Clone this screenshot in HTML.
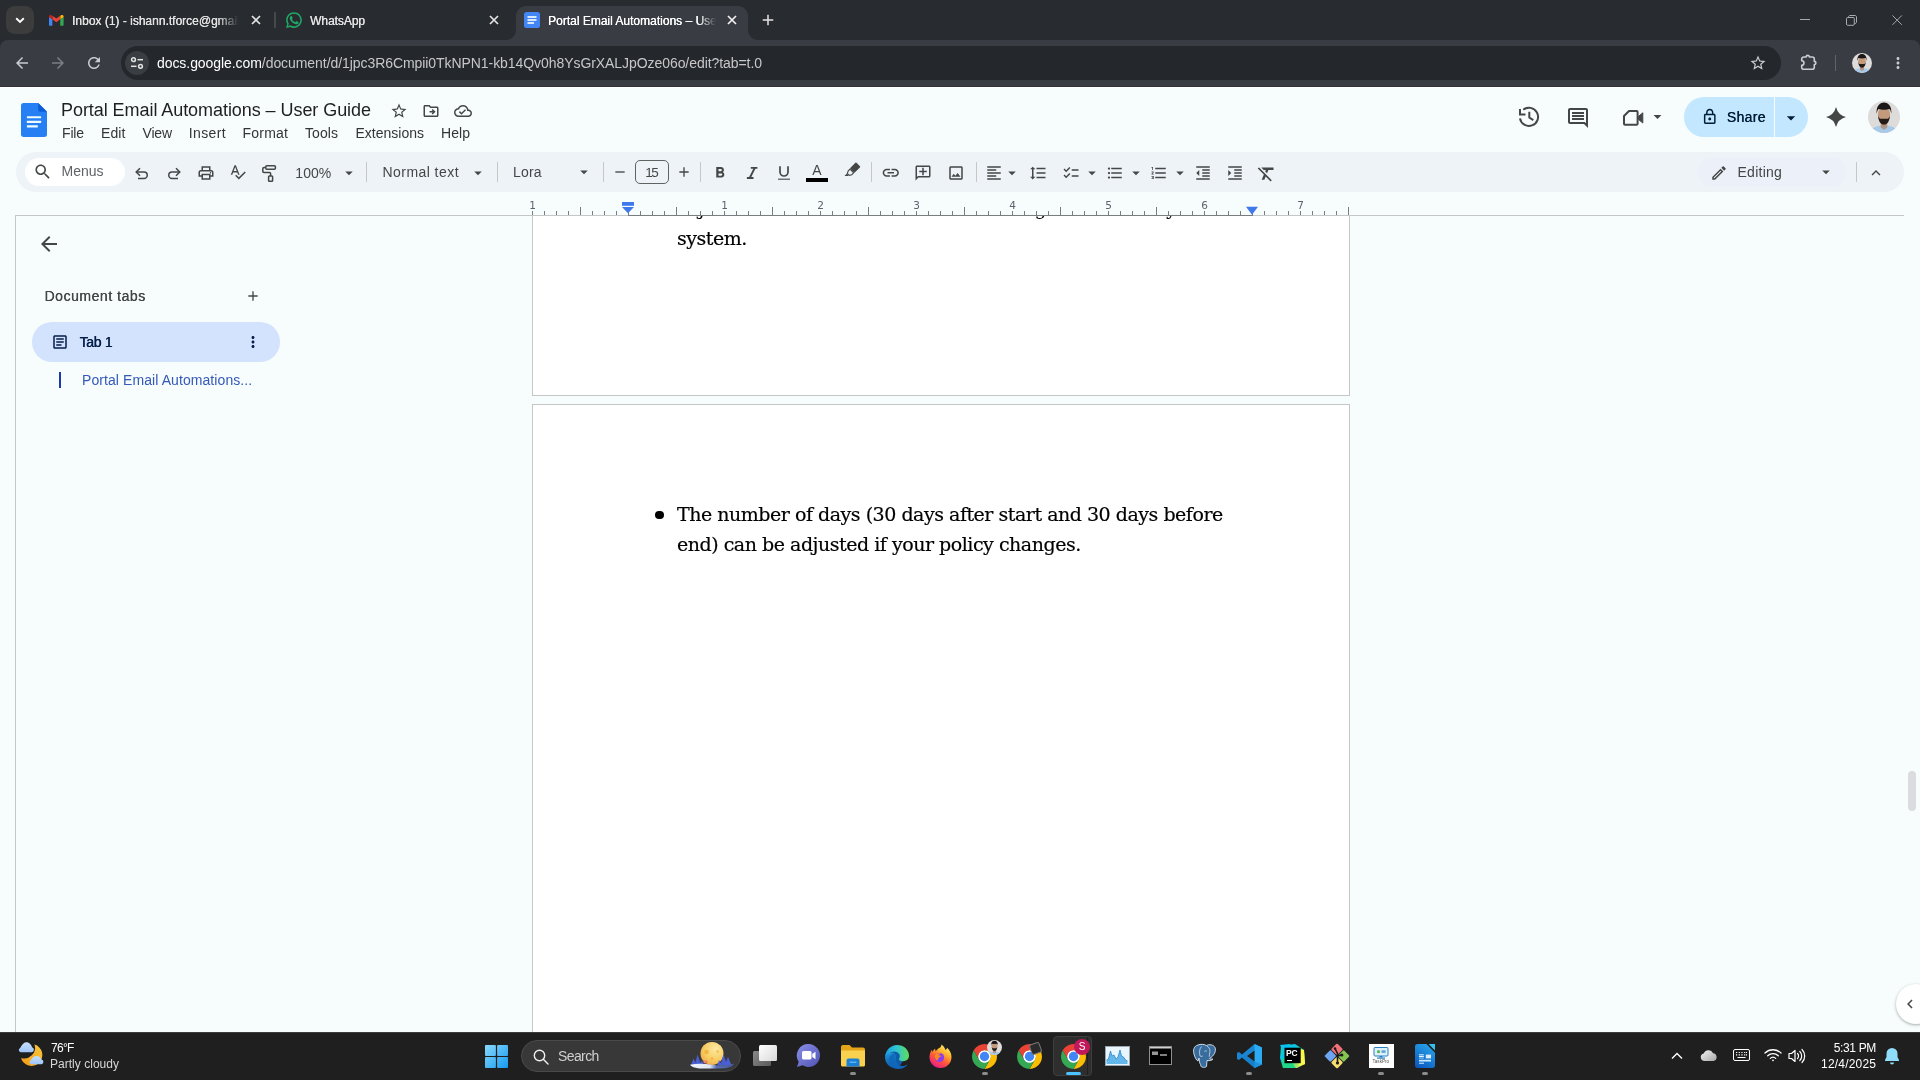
<!DOCTYPE html>
<html lang="en"><head><meta charset="utf-8"><title>Portal Email Automations – User Guide - Google Docs</title>
<style>html,body{margin:0;padding:0;}body{width:1920px;height:1080px;position:relative;overflow:hidden;background:#f7fcfc;font-family:"Liberation Sans",sans-serif;}svg{display:block;overflow:visible}</style>
</head><body><div id="root" style="position:absolute;left:0;top:0;width:1920px;height:1080px;will-change:transform;">
<div style="position:absolute;left:0px;top:0px;width:1920px;height:87px;background:#282b2f;"></div>
<div style="position:absolute;left:0px;top:40px;width:1920px;height:47px;background:#393c42;border-radius:8px 8px 0 0;"></div>
<div style="position:absolute;left:6.25px;top:6.25px;width:27.5px;height:27.5px;background:#3c3c3c;border-radius:8.500px;"></div>
<svg style="position:absolute;left:12px;top:12px" width="16" height="16" viewBox="0 0 16 16" fill="none" stroke="#ffffff" stroke-width="1.900"><path d="M4.200 6.200L8 9.900l3.800-3.700"/></svg>
<svg style="position:absolute;left:48.700px;top:14.500px" width="14.600" height="10.800" viewBox="0 0 17 13" preserveAspectRatio="none"><path d="M0 1.6V11.8c0 .66.54 1.2 1.2 1.2H3.9V5.2L0 2.3z" fill="#4285f4"/><path d="M13.1 13h2.7c.66 0 1.2-.54 1.2-1.200V2.300l-3.900 2.900z" fill="#34a853"/><path d="M13.1 .9v4.300L17 2.300V1.700c0-1.450-1.650-2.270-2.800-1.400z" fill="#fbbc04"/><path d="M3.900 5.200V.9l4.600 3.450L13.100.9v4.300L8.500 8.650z" fill="#ea4335"/><path d="M0 1.700v.6l3.900 2.900V.9L2.800.3C1.650-.57 0 .25 0 1.700z" fill="#c5221f"/></svg>
<span style="position:absolute;top:14.84px;font-family:'Liberation Sans', sans-serif;font-size:12px;line-height:1;color:#e3e3e3;white-space:pre;text-shadow:0.25px 0 0 #e3e3e3;left:72.00px;width:168px;padding-bottom:4px;overflow:hidden;-webkit-mask-image:linear-gradient(90deg,#000 145px,transparent 167px);mask-image:linear-gradient(90deg,#000 145px,transparent 167px);">Inbox (1) - ishann.tforce@gmail.com - Gmail</span>
<svg style="position:absolute;left:249.9px;top:14.2px" width="12" height="12" viewBox="0 0 12 12" fill="none" stroke="#e3e3e3" stroke-width="1.700"><path d="M2 2l8 8M10 2l-8 8"/></svg>
<div style="position:absolute;left:274.3px;top:12px;width:1.8px;height:16px;background:#45484d;"></div>
<svg style="position:absolute;left:285px;top:11px" width="18" height="18" viewBox="0 0 24 24"><path d="M12 1.500C6.200 1.500 1.500 6.200 1.500 12c0 1.900.5 3.700 1.400 5.300L1.400 22.600l5.500-1.400c1.500.8 3.300 1.300 5.100 1.300 5.800 0 10.500-4.700 10.500-10.500S17.800 1.500 12 1.500z" fill="#20a866"/><path d="M12 3.600c-4.600 0-8.400 3.800-8.400 8.400 0 1.700.5 3.300 1.400 4.700l-.9 3.200 3.300-.9c1.300.8 2.900 1.300 4.600 1.300 4.600 0 8.400-3.800 8.400-8.400S16.600 3.600 12 3.600z" fill="#282b2f"/><path d="M9.300 7.300c-.2-.5-.4-.5-.6-.5h-.6c-.2 0-.5.100-.8.400-.3.300-1 1-1 2.400s1 2.800 1.200 3c.100.200 2 3.200 5 4.400 2.500 1 3 .8 3.500.700.500-.050 1.700-.700 2-1.400.2-.700.2-1.200.2-1.400-.100-.100-.300-.200-.600-.400l-2-1c-.300-.100-.500-.100-.700.100l-.900 1.200c-.200.200-.300.200-.600.100-.300-.100-1.300-.500-2.400-1.500-.900-.800-1.500-1.800-1.700-2.100-.200-.300 0-.500.100-.600l.500-.500c.100-.200.200-.300.300-.500.100-.200 0-.400 0-.500z" fill="#20a866"/></svg>
<span style="position:absolute;top:14.84px;font-family:'Liberation Sans', sans-serif;font-size:12px;line-height:1;color:#e3e3e3;white-space:pre;letter-spacing:-0.048px;text-shadow:0.25px 0 0 #e3e3e3;left:310.00px;">WhatsApp</span>
<svg style="position:absolute;left:487.9px;top:14.2px" width="12" height="12" viewBox="0 0 12 12" fill="none" stroke="#e3e3e3" stroke-width="1.700"><path d="M2 2l8 8M10 2l-8 8"/></svg>
<svg style="position:absolute;left:506.300px;top:6px" width="252" height="34" viewBox="0 0 252 34"><path d="M0 34c5.500 0 10-4.500 10-10V10C10 4.500 14.500 0 20 0h212c5.500 0 10 4.500 10 10v14c0 5.500 4.500 10 10 10z" fill="#393c42"/></svg>
<svg style="position:absolute;left:524px;top:12px" width="16" height="16" viewBox="0 0 16 16"><rect width="16" height="16" rx="2.500" fill="#4285f4"/><rect x="3.500" y="4.200" width="9" height="1.600" fill="#fff"/><rect x="3.500" y="7.200" width="9" height="1.600" fill="#fff"/><rect x="3.500" y="10.200" width="6.500" height="1.600" fill="#fff"/></svg>
<span style="position:absolute;top:14.84px;font-family:'Liberation Sans', sans-serif;font-size:12px;line-height:1;color:#ffffff;white-space:pre;text-shadow:0.25px 0 0 #ffffff;left:548.00px;width:169px;padding-bottom:4px;overflow:hidden;-webkit-mask-image:linear-gradient(90deg,#000 150px,transparent 168px);mask-image:linear-gradient(90deg,#000 150px,transparent 168px);">Portal Email Automations – User Guide - Google Docs</span>
<svg style="position:absolute;left:725.9px;top:14.2px" width="12" height="12" viewBox="0 0 12 12" fill="none" stroke="#f1f1f1" stroke-width="1.700"><path d="M2 2l8 8M10 2l-8 8"/></svg>
<svg style="position:absolute;left:758.50px;top:11.00px" width="18" height="18" viewBox="0 0 24 24" fill="#e3e3e3" ><path d="M19 13h-6v6h-2v-6H5v-2h6V5h2v6h6v2z"/></svg>
<div style="position:absolute;left:1800px;top:19px;width:10px;height:1px;background:#a8abae;"></div>
<svg style="position:absolute;left:1845.500px;top:14.500px" width="11" height="11" viewBox="0 0 11 11" fill="none" stroke="#a8abae" stroke-width="1"><rect x=".5" y="2.500" width="7.800" height="7.800" rx="1.200"/><path d="M2.500 2.500v-.5c0-.83.670-1.500 1.500-1.500h5c.830 0 1.500.670 1.500 1.500v5c0 .830-.670 1.500-1.500 1.500h-.5"/></svg>
<svg style="position:absolute;left:1892px;top:15px" width="10.300" height="10.300" viewBox="0 0 11 11" stroke="#a8abae" stroke-width="1.050"><path d="M.5.500l10 10M10.500.500l-10 10"/></svg>
<svg style="position:absolute;left:13.00px;top:54.00px" width="18" height="18" viewBox="0 0 24 24" fill="#c9ccd2" ><path d="M20 11H7.83l5.59-5.59L12 4l-8 8 8 8 1.41-1.41L7.83 13H20v-2z"/></svg>
<svg style="position:absolute;left:49.00px;top:54.00px" width="18" height="18" viewBox="0 0 24 24" fill="#7b7e83" ><path d="M12 4l-1.41 1.41L16.17 11H4v2h12.17l-5.58 5.59L12 20l8-8z"/></svg>
<svg style="position:absolute;left:84.75px;top:54.00px" width="18" height="18" viewBox="0 0 24 24" fill="#c9ccd2" ><path d="M17.65 6.35C16.2 4.9 14.21 4 12 4c-4.42 0-7.99 3.58-7.99 8s3.57 8 7.99 8c3.73 0 6.84-2.55 7.73-6h-2.08c-.82 2.33-3.04 4-5.65 4-3.31 0-6-2.69-6-6s2.69-6 6-6c1.66 0 3.14.69 4.22 1.78L13 11h7V4l-2.35 2.35z"/></svg>
<div style="position:absolute;left:121px;top:46px;width:1660px;height:34px;background:#24272c;border-radius:17px;"></div>
<div style="position:absolute;left:125px;top:51px;width:24px;height:24px;background:#3a3d42;border-radius:12px;"></div>
<svg style="position:absolute;left:129px;top:55px" width="16" height="16" viewBox="0 0 16 16" fill="none" stroke="#e3e3e3" stroke-width="1.500"><circle cx="4.500" cy="4.700" r="1.900"/><path d="M8.500 4.700h5.500"/><circle cx="11.500" cy="11.300" r="1.900"/><path d="M2 11.300h5.500"/></svg>
<span style="position:absolute;top:56.15px;font-family:'Liberation Sans', sans-serif;font-size:14px;line-height:1;color:#c7c7c7;white-space:pre;letter-spacing:-0.066px;left:157.00px;"><span style="color:#fff">docs.google.com</span>/document/d/1jpc3R6Cmpii0TkNPN1-kb14Qv0h8YsGrXALJpOze06o/edit?tab=t.0</span>
<svg style="position:absolute;left:1748.50px;top:54.00px" width="18" height="18" viewBox="0 0 24 24" fill="#c9ccd2" ><path d="M22 9.24l-7.19-.62L12 2 9.19 8.63 2 9.24l5.46 4.73L5.82 21 12 17.27 18.18 21l-1.63-7.03L22 9.24zM12 15.4l-3.76 2.27 1-4.28-3.32-2.88 4.38-.38L12 6.1l1.71 4.04 4.38.38-3.32 2.88 1 4.28L12 15.4z"/></svg>
<svg style="position:absolute;left:1799px;top:53px" width="20" height="20" viewBox="0 0 20 20" fill="none" stroke="#c9ccd2" stroke-width="1.600" stroke-linejoin="round"><path d="M4.700 4H7.200A1.600 1.600 0 0 1 10.400 4H13.300A2 2 0 0 1 15.300 6V8.400A1.600 1.600 0 0 1 15.300 11.600V14.300A2 2 0 0 1 13.300 16.300H4.700A2 2 0 0 1 2.700 14.300V12.300A2.300 2.300 0 0 0 2.700 7.700V6A2 2 0 0 1 4.700 4Z"/></svg>
<div style="position:absolute;left:1835px;top:55px;width:1px;height:16px;background:#5f6368;"></div>
<svg style="position:absolute;left:1851.75px;top:53px" width="20" height="20" viewBox="0 0 40 40"><defs><clipPath id="av1861"><circle cx="20" cy="20" r="20"/></clipPath></defs><g clip-path="url(#av1861)"><rect width="40" height="40" fill="#dedcda"/><path d="M3 40c1-7 7-9.500 17-9.500s16 2.500 17 9.500z" fill="#a9c9e8"/><path d="M16 27h8v6l-4 3-4-3z" fill="#b98d6e"/><ellipse cx="20" cy="17" rx="7.600" ry="9.800" fill="#c39a7c"/><path d="M10.800 16c-.800-9 3.500-14 9.200-14s10 5 9.200 14c-.600-3-1.300-5-2.400-6-3.500 1.200-10 1.200-13.600 0-1.100 1-1.800 3-2.400 6z" fill="#1b1716"/><path d="M12.600 18c.300 7 3.200 11.500 7.400 11.500s7.100-4.500 7.400-11.500c-1 3.500-2.400 4.200-4 4.200h-6.800c-1.600 0-3-.700-4-4.200z" fill="#241c19"/><path d="M16.500 30.500l3.500 4 3.500-4" stroke="#8fb3d9" stroke-width="1" fill="none"/></g></svg>
<svg style="position:absolute;left:1889.00px;top:54.00px" width="18" height="18" viewBox="0 0 24 24" fill="#c9ccd2" ><path d="M12 8c1.1 0 2-.9 2-2s-.9-2-2-2-2 .9-2 2 .9 2 2 2zm0 2c-1.1 0-2 .9-2 2s.9 2 2 2 2-.9 2-2-.9-2-2-2zm0 6c-1.1 0-2 .9-2 2s.9 2 2 2 2-.9 2-2-.9-2-2-2z"/></svg>
<div style="position:absolute;left:0px;top:87px;width:1920px;height:945px;background:#f7fcfc;"></div>
<div style="position:absolute;left:0px;top:86px;width:1920px;height:1px;background:#2f3236;"></div>
<div style="position:absolute;left:0px;top:87px;width:1920px;height:1px;background:#ffffff;"></div>
<svg style="position:absolute;left:21px;top:103px" width="26" height="34" viewBox="0 0 26 34"><path d="M2.500 0H17.200L26 8.800V31.500c0 1.400-1.100 2.500-2.500 2.500h-21C1.100 34 0 32.900 0 31.500v-29C0 1.100 1.100 0 2.500 0z" fill="#2680f4"/><path d="M17.200 0L26 8.800H19.200c-1.100 0-2-.9-2-2z" fill="#0b5cd6"/><rect x="5.900" y="13.200" width="14.200" height="2.100" rx=".500" fill="#eefcff"/><rect x="5.900" y="17.800" width="14.200" height="2.100" rx=".500" fill="#eefcff"/><rect x="5.900" y="22.300" width="10.900" height="2.100" rx=".500" fill="#eefcff"/></svg>
<span style="position:absolute;top:100.76px;font-family:'Liberation Sans', sans-serif;font-size:18px;line-height:1;color:#1f1f1f;white-space:pre;letter-spacing:-0.059px;left:61.00px;">Portal Email Automations – User Guide</span>
<svg style="position:absolute;left:389.75px;top:102.00px" width="18" height="18" viewBox="0 0 24 24" fill="#444746" ><path d="M22 9.24l-7.19-.62L12 2 9.19 8.63 2 9.24l5.46 4.73L5.82 21 12 17.27 18.18 21l-1.63-7.03L22 9.24zM12 15.4l-3.76 2.27 1-4.28-3.32-2.88 4.38-.38L12 6.1l1.71 4.04 4.38.38-3.32 2.88 1 4.28L12 15.4z"/></svg>
<svg style="position:absolute;left:421.50px;top:102.00px" width="18" height="18" viewBox="0 0 24 24" fill="#444746" ><path d="M20 6h-8l-2-2H4c-1.1 0-2 .9-2 2v12c0 1.1.9 2 2 2h16c1.1 0 2-.9 2-2V8c0-1.1-.9-2-2-2zm0 12H4V6h5.170l2 2H20v10zm-7.160-2.590L14.250 16.820 18.080 13l-3.830-3.830-1.410 1.420L14.260 12H10v2h4.260l-1.420 1.410z"/></svg>
<svg style="position:absolute;left:453.80px;top:101.80px" width="18" height="18" viewBox="0 0 24 24" fill="#444746" ><path d="M19.35 10.04C18.67 6.59 15.64 4 12 4 9.110 4 6.6 5.640 5.350 8.040 2.340 8.360 0 10.91 0 14c0 3.310 2.690 6 6 6h13c2.760 0 5-2.240 5-5 0-2.640-2.050-4.780-4.650-4.960zM19 18H6c-2.210 0-4-1.790-4-4s1.790-4 4-4h.71C7.370 7.690 9.480 6 12 6c3.040 0 5.5 2.460 5.5 5.5v.5H19c1.660 0 3 1.340 3 3s-1.340 3-3 3zm-9-3.820l-2.090-2.090L6.5 13.5 10 17l6.010-6.010-1.410-1.410z"/></svg>
<span style="position:absolute;top:126.15px;font-family:'Liberation Sans', sans-serif;font-size:14px;line-height:1;color:#333639;white-space:pre;letter-spacing:-0.161px;left:62.00px;">File</span>
<span style="position:absolute;top:126.15px;font-family:'Liberation Sans', sans-serif;font-size:14px;line-height:1;color:#333639;white-space:pre;letter-spacing:0.107px;left:101.00px;">Edit</span>
<span style="position:absolute;top:126.15px;font-family:'Liberation Sans', sans-serif;font-size:14px;line-height:1;color:#333639;white-space:pre;letter-spacing:-0.170px;left:142.50px;">View</span>
<span style="position:absolute;top:126.15px;font-family:'Liberation Sans', sans-serif;font-size:14px;line-height:1;color:#333639;white-space:pre;letter-spacing:0.361px;left:188.75px;">Insert</span>
<span style="position:absolute;top:126.15px;font-family:'Liberation Sans', sans-serif;font-size:14px;line-height:1;color:#333639;white-space:pre;letter-spacing:0.210px;left:242.50px;">Format</span>
<span style="position:absolute;top:126.15px;font-family:'Liberation Sans', sans-serif;font-size:14px;line-height:1;color:#333639;white-space:pre;letter-spacing:0.069px;left:305.00px;">Tools</span>
<span style="position:absolute;top:126.15px;font-family:'Liberation Sans', sans-serif;font-size:14px;line-height:1;color:#333639;white-space:pre;left:355.50px;">Extensions</span>
<span style="position:absolute;top:126.15px;font-family:'Liberation Sans', sans-serif;font-size:14px;line-height:1;color:#333639;white-space:pre;letter-spacing:0.058px;left:441.00px;">Help</span>
<svg style="position:absolute;left:1517px;top:105px" width="24" height="24" viewBox="0 0 24 24" fill="none" stroke="#444746" stroke-width="2"><path d="M6.300 4.700A9.100 9.100 0 1 1 3 13.300"/><path d="M3 4V9.500H8.500"/><path d="M12.300 6.800V12.500L16.300 15.200"/></svg>
<svg style="position:absolute;left:1566.10px;top:106.00px" width="24" height="24" viewBox="0 0 24 24" fill="#444746" ><path d="M21.99 4c0-1.1-.89-2-1.99-2H4c-1.1 0-2 .9-2 2v12c0 1.1.9 2 2 2h14l4 4-.01-18zM20 4v13.17L18.83 16H4V4h16zM6 12h12v2H6zm0-3h12v2H6zm0-3h12v2H6z"/></svg>
<svg style="position:absolute;left:1620px;top:105px" width="26" height="24" viewBox="0 0 26 24" fill="none" stroke="#444746" stroke-width="2" stroke-linejoin="round"><path d="M9 6H16.600a1 1 0 0 1 1 1V18.750a1 1 0 0 1-1 1H5a1 1 0 0 1-1-1V11z"/><path d="M18.600 11.300L22.800 7.800V18L18.600 14.500z" fill="#444746" stroke-width="1"/></svg>
<svg style="position:absolute;left:1647.50px;top:107.00px" width="19" height="19" viewBox="0 0 24 24" fill="#444746" ><path d="M7 10l5 5 5-5z"/></svg>
<div style="position:absolute;left:1684px;top:97px;width:124px;height:40px;border-radius:20px;background:#c2e7ff;"></div>
<div style="position:absolute;left:1774px;top:97px;width:1px;height:40px;background:#f7fcfc;"></div>
<svg style="position:absolute;left:1701.25px;top:108.05px" width="17.5" height="17.5" viewBox="0 0 24 24" fill="#001d35" ><path d="M18 8h-1V6c0-2.76-2.24-5-5-5S7 3.24 7 6v2H6c-1.1 0-2 .9-2 2v10c0 1.1.9 2 2 2h12c1.1 0 2-.9 2-2V10c0-1.1-.9-2-2-2zM9 6c0-1.66 1.34-3 3-3s3 1.34 3 3v2H9V6zm9 14H6V10h12v10zm-6-3c1.1 0 2-.9 2-2s-.9-2-2-2-2 .9-2 2 .9 2 2 2z"/></svg>
<span style="position:absolute;top:110.15px;font-family:'Liberation Sans', sans-serif;font-size:14px;line-height:1;color:#001d35;white-space:pre;letter-spacing:0.309px;text-shadow:0.35px 0 0 #001d35;left:1726.75px;">Share</span>
<svg style="position:absolute;left:1780.75px;top:107.50px" width="20" height="20" viewBox="0 0 24 24" fill="#001d35" ><path d="M7 10l5 5 5-5z"/></svg>
<svg style="position:absolute;left:1823.75px;top:105px" width="24" height="24" viewBox="0 0 24 24"><path d="M12 2Q14 10 22 12Q14 14 12 22Q10 14 2 12Q10 10 12 2z" fill="#444746"/></svg>
<svg style="position:absolute;left:1867.75px;top:101px" width="32" height="32" viewBox="0 0 40 40"><defs><clipPath id="av1883"><circle cx="20" cy="20" r="20"/></clipPath></defs><g clip-path="url(#av1883)"><rect width="40" height="40" fill="#dedcda"/><path d="M3 40c1-7 7-9.500 17-9.500s16 2.500 17 9.500z" fill="#a9c9e8"/><path d="M16 27h8v6l-4 3-4-3z" fill="#b98d6e"/><ellipse cx="20" cy="17" rx="7.600" ry="9.800" fill="#c39a7c"/><path d="M10.800 16c-.800-9 3.500-14 9.200-14s10 5 9.200 14c-.600-3-1.300-5-2.400-6-3.500 1.200-10 1.200-13.600 0-1.100 1-1.800 3-2.400 6z" fill="#1b1716"/><path d="M12.600 18c.300 7 3.200 11.500 7.400 11.500s7.100-4.500 7.400-11.500c-1 3.500-2.400 4.200-4 4.200h-6.800c-1.600 0-3-.700-4-4.200z" fill="#241c19"/><path d="M16.500 30.500l3.500 4 3.500-4" stroke="#8fb3d9" stroke-width="1" fill="none"/></g></svg>
<div style="position:absolute;left:16px;top:152px;width:1888px;height:40px;border-radius:20px;background:#eef3f7;"></div>
<div style="position:absolute;left:25px;top:158px;width:100px;height:28px;border-radius:14px;background:#ffffff;"></div>
<svg style="position:absolute;left:33.45px;top:162.35px" width="19.5" height="19.5" viewBox="0 0 24 24" fill="#444746" ><path d="M15.5 14h-.79l-.28-.27C15.41 12.59 16 11.11 16 9.5 16 5.91 13.09 3 9.5 3S3 5.91 3 9.5 5.91 16 9.5 16c1.61 0 3.09-.59 4.23-1.57l.27.28v.79l5 4.99L20.49 19l-4.99-5zm-6 0C7.01 14 5 11.99 5 9.5S7.01 5 9.5 5 14 7.01 14 9.5 11.99 14 9.5 14z"/></svg>
<span style="position:absolute;top:164.15px;font-family:'Liberation Sans', sans-serif;font-size:14px;line-height:1;color:#5f6368;white-space:pre;letter-spacing:-0.007px;left:61.60px;">Menus</span>
<svg style="position:absolute;left:133px;top:164px" width="18" height="18" viewBox="0 0 18 18" fill="none" stroke="#444746" stroke-width="1.500"><path d="M7 4.200L3.200 8 7 11.800"/><path d="M3.600 8H11a3.250 3.250 0 0 1 0 6.500H5"/></svg>
<svg style="position:absolute;left:165px;top:164px" width="18" height="18" viewBox="0 0 18 18" fill="none" stroke="#444746" stroke-width="1.500"><path d="M11 4.200L14.800 8 11 11.800"/><path d="M14.400 8H7a3.250 3.250 0 0 0 0 6.500h6"/></svg>
<svg style="position:absolute;left:197.00px;top:164.00px" width="18" height="18" viewBox="0 0 24 24" fill="#444746" ><path d="M19 8h-1V3H6v5H5c-1.66 0-3 1.34-3 3v6h4v4h12v-4h4v-6c0-1.66-1.34-3-3-3zM8 5h8v3H8V5zm8 12v2H8v-4h8v2zm2-2v-2H6v2H4v-4c0-.55.45-1 1-1h14c.55 0 1 .45 1 1v4h-2zM18 10.500a1 1 0 1 0 0 2 1 1 0 0 0 0-2z"/></svg>
<svg style="position:absolute;left:229.25px;top:163.45px" width="17.5" height="17.5" viewBox="0 0 24 24" fill="#444746" ><path d="M12.45 16h2.09L9.43 3H7.57L2.46 16h2.09l1.12-3h5.64l1.14 3zm-6.02-5L8.5 5.48 10.57 11H6.43zm15.16.59l-8.09 8.09L9.83 16l-1.41 1.41 5.09 5.09L23 13l-1.41-1.41z"/></svg>
<svg style="position:absolute;left:260px;top:163px" width="20" height="20" viewBox="0 0 20 20" fill="none" stroke="#444746" stroke-width="1.500" stroke-linejoin="round"><rect x="5.800" y="2.700" width="9.600" height="3.600" rx="1"/><path d="M5.800 4.500H4Q2.800 4.500 2.800 5.700V8.300Q2.800 9.500 4 9.500H9.500Q10.600 9.500 10.600 10.600V13"/><rect x="8.600" y="13" width="4" height="5.300" rx=".800"/></svg>
<span style="position:absolute;top:165.65px;font-family:'Liberation Sans', sans-serif;font-size:14px;line-height:1;color:#444746;white-space:pre;letter-spacing:0.054px;left:295.30px;">100%</span>
<svg style="position:absolute;left:339.75px;top:163.50px" width="18" height="18" viewBox="0 0 24 24" fill="#444746" ><path d="M7 10l5 5 5-5z"/></svg>
<div style="position:absolute;left:366px;top:162px;width:1px;height:20px;background:#c7c7c7;"></div>
<span style="position:absolute;top:165.15px;font-family:'Liberation Sans', sans-serif;font-size:14px;line-height:1;color:#444746;white-space:pre;letter-spacing:0.445px;left:382.50px;">Normal text</span>
<svg style="position:absolute;left:468.50px;top:163.50px" width="18" height="18" viewBox="0 0 24 24" fill="#444746" ><path d="M7 10l5 5 5-5z"/></svg>
<div style="position:absolute;left:497px;top:162px;width:1px;height:20px;background:#c7c7c7;"></div>
<span style="position:absolute;top:165.15px;font-family:'Liberation Sans', sans-serif;font-size:14px;line-height:1;color:#444746;white-space:pre;letter-spacing:0.205px;left:513.00px;">Lora</span>
<svg style="position:absolute;left:574.75px;top:163.00px" width="18" height="18" viewBox="0 0 24 24" fill="#444746" ><path d="M7 10l5 5 5-5z"/></svg>
<div style="position:absolute;left:603px;top:162px;width:1px;height:20px;background:#c7c7c7;"></div>
<svg style="position:absolute;left:612.00px;top:164.00px" width="16" height="16" viewBox="0 0 24 24" fill="#444746" ><path d="M19 13H5v-2h14v2z"/></svg>
<div style="position:absolute;left:635px;top:160px;width:32px;height:22px;border:1px solid #5f6361;border-radius:5px;"></div>
<span style="position:absolute;top:165.57px;font-family:'Liberation Sans', sans-serif;font-size:13.5px;line-height:1;color:#444746;white-space:pre;letter-spacing:-1.421px;left:645.20px;">15</span>
<svg style="position:absolute;left:675.75px;top:164.00px" width="16" height="16" viewBox="0 0 24 24" fill="#444746" ><path d="M19 13h-6v6h-2v-6H5v-2h6V5h2v6h6v2z"/></svg>
<div style="position:absolute;left:700px;top:162px;width:1px;height:20px;background:#c7c7c7;"></div>
<svg style="position:absolute;left:710.80px;top:163.50px" width="18" height="18" viewBox="0 0 24 24" fill="#444746" ><path d="M15.6 10.79c.97-.67 1.65-1.77 1.65-2.79 0-2.26-1.75-4-4-4H7v14h7.04c2.09 0 3.71-1.7 3.71-3.79 0-1.52-.86-2.82-2.15-3.42zM10 6.5h3c.83 0 1.5.67 1.5 1.5s-.67 1.5-1.5 1.5h-3v-3zm3.5 9H10v-3h3.5c.83 0 1.5.67 1.5 1.5s-.67 1.5-1.5 1.5z"/></svg>
<svg style="position:absolute;left:744px;top:164px" width="18" height="18" viewBox="0 0 18 18" fill="none" stroke="#444746" stroke-width="1.900"><path d="M6.800 3.900h6.600M2.900 14h6.600M10.800 3.900L5.700 14"/></svg>
<svg style="position:absolute;left:775px;top:163px" width="18" height="18" viewBox="0 0 18 18" fill="none" stroke="#444746"><path d="M5 3.300V9a4 4 0 0 0 8 0V3.300" stroke-width="1.700"/><path d="M3 16.200h12" stroke-width="1.100"/></svg>
<span style="position:absolute;top:162.95px;font-family:'Liberation Sans', sans-serif;font-size:14px;line-height:1;color:#444746;white-space:pre;left:812.20px;">A</span>
<div style="position:absolute;left:806px;top:178px;width:22px;height:4px;background:#000000;"></div>
<svg style="position:absolute;left:840.500px;top:161.500px" width="20" height="20" viewBox="0 0 20 20"><g transform="rotate(45 10 9.500)"><rect x="7" y="-0.500" width="6.400" height="8.500" rx=".800" fill="#444746"/><path d="M7.600 8.500h5.200v2.700l-1.300 2.300H8.900l-1.300-2.300z" fill="none" stroke="#444746" stroke-width="1.100"/></g><path d="M3.500 14h4.200l-1.900-2.400z" fill="#444746"/></svg>
<div style="position:absolute;left:871px;top:162px;width:1px;height:20px;background:#c7c7c7;"></div>
<svg style="position:absolute;left:881.05px;top:163.05px" width="19.5" height="19.5" viewBox="0 0 24 24" fill="#444746" ><path d="M3.9 12c0-1.71 1.39-3.1 3.1-3.1h4V7H7c-2.76 0-5 2.24-5 5s2.24 5 5 5h4v-1.9H7c-1.71 0-3.1-1.39-3.1-3.1zM8 13h8v-2H8v2zm9-6h-4v1.9h4c1.71 0 3.1 1.39 3.1 3.1s-1.39 3.1-3.1 3.1h-4V17h4c2.76 0 5-2.24 5-5s-2.24-5-5-5z"/></svg>
<svg style="position:absolute;left:914.00px;top:164.00px" width="18" height="18" viewBox="0 0 24 24" fill="#444746" ><g transform="translate(24,0) scale(-1,1)"><path d="M22 4c0-1.1-.9-2-2-2H4c-1.1 0-2 .9-2 2v12c0 1.1.9 2 2 2h14l4 4V4zm-2 13.17L18.83 16H4V4h16v13.17zM13 5h-2v4H7v2h4v4h2v-4h4V9h-4z"/></g></svg>
<svg style="position:absolute;left:946.75px;top:163.50px" width="18" height="18" viewBox="0 0 24 24" fill="#444746" ><path d="M19 5v14H5V5h14m0-2H5c-1.1 0-2 .9-2 2v14c0 1.1.9 2 2 2h14c1.1 0 2-.9 2-2V5c0-1.1-.9-2-2-2zm-4.86 8.86l-3 3.87L9 13.14 6 17h12l-3.86-5.14z"/></svg>
<div style="position:absolute;left:976px;top:162px;width:1px;height:20px;background:#c7c7c7;"></div>
<svg style="position:absolute;left:984.75px;top:163.50px" width="18" height="18" viewBox="0 0 24 24" fill="#444746" ><path d="M15 15H3v2h12v-2zm0-8H3v2h12V7zM3 13h18v-2H3v2zm0 8h18v-2H3v2zM3 3v2h18V3H3z"/></svg>
<svg style="position:absolute;left:1003.00px;top:163.50px" width="18" height="18" viewBox="0 0 24 24" fill="#444746" ><path d="M7 10l5 5 5-5z"/></svg>
<svg style="position:absolute;left:1029.00px;top:163.50px" width="18" height="18" viewBox="0 0 24 24" fill="#444746" ><path d="M6 7h2.5L5 3.5 1.5 7H4v10H1.5L5 20.5 8.5 17H6V7zm4-2v2h12V5H10zm0 14h12v-2H10v2zm0-6h12v-2H10v2z"/></svg>
<svg style="position:absolute;left:1061.75px;top:163.50px" width="18" height="18" viewBox="0 0 24 24" fill="#444746" ><path d="M22 7h-9v2h9V7zm0 8h-9v2h9v-2zM5.54 11L2 7.46l1.41-1.41 2.12 2.12 4.24-4.24 1.41 1.41L5.54 11zm0 8L2 15.46l1.41-1.41 2.12 2.12 4.24-4.24 1.41 1.41L5.54 19z"/></svg>
<svg style="position:absolute;left:1082.75px;top:163.50px" width="18" height="18" viewBox="0 0 24 24" fill="#444746" ><path d="M7 10l5 5 5-5z"/></svg>
<svg style="position:absolute;left:1106.00px;top:163.50px" width="18" height="18" viewBox="0 0 24 24" fill="#444746" ><path d="M4 10.5c-.83 0-1.5.67-1.5 1.5s.67 1.5 1.5 1.5 1.5-.67 1.5-1.5-.67-1.5-1.5-1.5zm0-6c-.83 0-1.5.67-1.5 1.5S3.17 7.5 4 7.5 5.5 6.83 5.5 6 4.83 4.5 4 4.5zm0 12c-.83 0-1.5.68-1.5 1.5s.68 1.5 1.5 1.5 1.5-.68 1.5-1.5-.67-1.5-1.5-1.5zM7 19h14v-2H7v2zm0-6h14v-2H7v2zm0-8v2h14V5H7z"/></svg>
<svg style="position:absolute;left:1126.75px;top:163.50px" width="18" height="18" viewBox="0 0 24 24" fill="#444746" ><path d="M7 10l5 5 5-5z"/></svg>
<svg style="position:absolute;left:1150.25px;top:163.50px" width="18" height="18" viewBox="0 0 24 24" fill="#444746" ><path d="M2 17h2v.5H3v1h1v.5H2v1h3v-4H2v1zm1-9h1V4H2v1h1v3zm-1 3h1.8L2 13.1v.9h3v-1H3.2L5 10.9V10H2v1zm5-6v2h14V5H7zm0 14h14v-2H7v2zm0-6h14v-2H7v2z"/></svg>
<svg style="position:absolute;left:1171.00px;top:163.50px" width="18" height="18" viewBox="0 0 24 24" fill="#444746" ><path d="M7 10l5 5 5-5z"/></svg>
<svg style="position:absolute;left:1193.50px;top:163.50px" width="18" height="18" viewBox="0 0 24 24" fill="#444746" ><path d="M11 17h10v-2H11v2zm-8-5l4 4V8l-4 4zm0 9h18v-2H3v2zM3 3v2h18V3H3zm8 6h10V7H11v2zm0 4h10v-2H11v2z"/></svg>
<svg style="position:absolute;left:1226.00px;top:163.50px" width="18" height="18" viewBox="0 0 24 24" fill="#444746" ><path d="M3 21h18v-2H3v2zM3 8v8l4-4-4-4zm8 9h10v-2H11v2zM3 3v2h18V3H3zm8 6h10V7H11v2zm0 4h10v-2H11v2z"/></svg>
<svg style="position:absolute;left:1256.30px;top:162.70px" width="21" height="21" viewBox="0 0 24 24" fill="#444746" ><path d="M3.27 5L2 6.27l6.97 6.97L6.5 19h3l1.57-3.66L16.73 21 18 19.73 3.55 5.27 3.27 5zM6 5v.18L8.82 8h2.4l-.72 1.68 2.1 2.1L14.21 8H20V5H6z"/></svg>
<div style="position:absolute;left:1697px;top:157px;width:150px;height:30px;border-radius:15px;background:#ebf0f9;"></div>
<svg style="position:absolute;left:1709.75px;top:163.50px" width="18" height="18" viewBox="0 0 24 24" fill="#444746" ><path d="M14.06 9.02l.92.92L5.92 19H5v-.92l9.06-9.06M17.66 3c-.25 0-.51.1-.7.29l-1.83 1.83 3.75 3.75 1.83-1.83c.39-.39.39-1.02 0-1.41l-2.34-2.34c-.2-.2-.45-.29-.71-.29zm-3.6 3.19L3 17.25V21h3.75L17.81 9.94l-3.75-3.750z"/></svg>
<span style="position:absolute;top:165.15px;font-family:'Liberation Sans', sans-serif;font-size:14px;line-height:1;color:#444746;white-space:pre;letter-spacing:0.260px;left:1737.50px;">Editing</span>
<svg style="position:absolute;left:1816.85px;top:162.80px" width="18" height="18" viewBox="0 0 24 24" fill="#444746" ><path d="M7 10l5 5 5-5z"/></svg>
<div style="position:absolute;left:1856px;top:162px;width:1px;height:20px;background:#c7c7c7;"></div>
<svg style="position:absolute;left:1866.75px;top:164.00px" width="18" height="18" viewBox="0 0 24 24" fill="#444746" ><path d="M12 8l-6 6 1.41 1.41L12 10.83l4.59 4.58L18 14z"/></svg>
<div style="position:absolute;left:15px;top:215px;width:1px;height:817px;background:#c4c7c5;"></div>
<div style="position:absolute;left:15px;top:215px;width:1889px;height:1px;background:#c4c7c5;"></div>
<svg style="position:absolute;left:37.00px;top:232.00px" width="24" height="24" viewBox="0 0 24 24" fill="#444746" ><path d="M20 11H7.83l5.59-5.59L12 4l-8 8 8 8 1.41-1.41L7.83 13H20v-2z"/></svg>
<span style="position:absolute;top:288.65px;font-family:'Liberation Sans', sans-serif;font-size:14px;line-height:1;color:#444746;white-space:pre;letter-spacing:0.546px;text-shadow:0.3px 0 0 #444746;left:44.40px;">Document tabs</span>
<svg style="position:absolute;left:245.00px;top:288.00px" width="16" height="16" viewBox="0 0 24 24" fill="#444746" ><path d="M19 13h-6v6h-2v-6H5v-2h6V5h2v6h6v2z"/></svg>
<div style="position:absolute;left:32px;top:322px;width:248px;height:40px;border-radius:20px;background:#d3e3fd;"></div>
<svg style="position:absolute;left:51.00px;top:333.00px" width="18" height="18" viewBox="0 0 24 24" fill="#041e49" ><path d="M19 5v14H5V5h14m0-2H5c-1.1 0-2 .9-2 2v14c0 1.1.9 2 2 2h14c1.1 0 2-.9 2-2V5c0-1.1-.9-2-2-2zm-5 14H7v-2h7v2zm3-4H7v-2h10v2zm0-4H7V7h10v2z"/></svg>
<span style="position:absolute;top:334.85px;font-family:'Liberation Sans', sans-serif;font-size:14px;line-height:1;color:#041e49;white-space:pre;letter-spacing:-0.278px;text-shadow:0.3px 0 0 #041e49;left:79.40px;">Tab 1</span>
<svg style="position:absolute;left:244.00px;top:333.00px" width="18" height="18" viewBox="0 0 24 24" fill="#041e49" ><path d="M12 8c1.1 0 2-.9 2-2s-.9-2-2-2-2 .9-2 2 .9 2 2 2zm0 2c-1.1 0-2 .9-2 2s.9 2 2 2 2-.9 2-2-.9-2-2-2zm0 6c-1.1 0-2 .9-2 2s.9 2 2 2 2-.9 2-2-.9-2-2-2z"/></svg>
<div style="position:absolute;left:59px;top:372px;width:2px;height:16px;background:#1c3aa9;"></div>
<span style="position:absolute;top:373.15px;font-family:'Liberation Sans', sans-serif;font-size:14px;line-height:1;color:#3559b8;white-space:pre;letter-spacing:0.080px;left:82.00px;">Portal Email Automations...</span>
<svg style="position:absolute;left:532px;top:203px" width="818" height="12" viewBox="0 0 818 12" fill="#7a7d80"><rect x="0" y="8" width="1" height="4"/><rect x="12" y="8" width="1" height="4"/><rect x="24" y="8" width="1" height="4"/><rect x="36" y="8" width="1" height="4"/><rect x="48" y="4" width="1" height="8"/><rect x="60" y="8" width="1" height="4"/><rect x="72" y="8" width="1" height="4"/><rect x="84" y="8" width="1" height="4"/><rect x="96" y="8" width="1" height="4"/><rect x="108" y="8" width="1" height="4"/><rect x="120" y="8" width="1" height="4"/><rect x="132" y="8" width="1" height="4"/><rect x="144" y="4" width="1" height="8"/><rect x="156" y="8" width="1" height="4"/><rect x="168" y="8" width="1" height="4"/><rect x="180" y="8" width="1" height="4"/><rect x="192" y="8" width="1" height="4"/><rect x="204" y="8" width="1" height="4"/><rect x="216" y="8" width="1" height="4"/><rect x="228" y="8" width="1" height="4"/><rect x="240" y="4" width="1" height="8"/><rect x="252" y="8" width="1" height="4"/><rect x="264" y="8" width="1" height="4"/><rect x="276" y="8" width="1" height="4"/><rect x="288" y="8" width="1" height="4"/><rect x="300" y="8" width="1" height="4"/><rect x="312" y="8" width="1" height="4"/><rect x="324" y="8" width="1" height="4"/><rect x="336" y="4" width="1" height="8"/><rect x="348" y="8" width="1" height="4"/><rect x="360" y="8" width="1" height="4"/><rect x="372" y="8" width="1" height="4"/><rect x="384" y="8" width="1" height="4"/><rect x="396" y="8" width="1" height="4"/><rect x="408" y="8" width="1" height="4"/><rect x="420" y="8" width="1" height="4"/><rect x="432" y="4" width="1" height="8"/><rect x="444" y="8" width="1" height="4"/><rect x="456" y="8" width="1" height="4"/><rect x="468" y="8" width="1" height="4"/><rect x="480" y="8" width="1" height="4"/><rect x="492" y="8" width="1" height="4"/><rect x="504" y="8" width="1" height="4"/><rect x="516" y="8" width="1" height="4"/><rect x="528" y="4" width="1" height="8"/><rect x="540" y="8" width="1" height="4"/><rect x="552" y="8" width="1" height="4"/><rect x="564" y="8" width="1" height="4"/><rect x="576" y="8" width="1" height="4"/><rect x="588" y="8" width="1" height="4"/><rect x="600" y="8" width="1" height="4"/><rect x="612" y="8" width="1" height="4"/><rect x="624" y="4" width="1" height="8"/><rect x="636" y="8" width="1" height="4"/><rect x="648" y="8" width="1" height="4"/><rect x="660" y="8" width="1" height="4"/><rect x="672" y="8" width="1" height="4"/><rect x="684" y="8" width="1" height="4"/><rect x="696" y="8" width="1" height="4"/><rect x="708" y="8" width="1" height="4"/><rect x="720" y="4" width="1" height="8"/><rect x="732" y="8" width="1" height="4"/><rect x="744" y="8" width="1" height="4"/><rect x="756" y="8" width="1" height="4"/><rect x="768" y="8" width="1" height="4"/><rect x="780" y="8" width="1" height="4"/><rect x="792" y="8" width="1" height="4"/><rect x="804" y="8" width="1" height="4"/><rect x="816" y="4" width="1" height="8"/></svg>
<div style="position:absolute;left:628px;top:215px;width:625px;height:1px;background:#7a7d80;"></div>
<span style="position:absolute;top:200.12px;font-family:'DejaVu Sans', 'Liberation Sans', sans-serif;font-size:10.5px;line-height:1;color:#5b6370;white-space:pre;left:529.16px;">1</span>
<span style="position:absolute;top:200.12px;font-family:'DejaVu Sans', 'Liberation Sans', sans-serif;font-size:10.5px;line-height:1;color:#5b6370;white-space:pre;left:721.16px;">1</span>
<span style="position:absolute;top:200.12px;font-family:'DejaVu Sans', 'Liberation Sans', sans-serif;font-size:10.5px;line-height:1;color:#5b6370;white-space:pre;left:817.16px;">2</span>
<span style="position:absolute;top:200.12px;font-family:'DejaVu Sans', 'Liberation Sans', sans-serif;font-size:10.5px;line-height:1;color:#5b6370;white-space:pre;left:913.16px;">3</span>
<span style="position:absolute;top:200.12px;font-family:'DejaVu Sans', 'Liberation Sans', sans-serif;font-size:10.5px;line-height:1;color:#5b6370;white-space:pre;left:1009.16px;">4</span>
<span style="position:absolute;top:200.12px;font-family:'DejaVu Sans', 'Liberation Sans', sans-serif;font-size:10.5px;line-height:1;color:#5b6370;white-space:pre;left:1105.16px;">5</span>
<span style="position:absolute;top:200.12px;font-family:'DejaVu Sans', 'Liberation Sans', sans-serif;font-size:10.5px;line-height:1;color:#5b6370;white-space:pre;left:1201.16px;">6</span>
<span style="position:absolute;top:200.12px;font-family:'DejaVu Sans', 'Liberation Sans', sans-serif;font-size:10.5px;line-height:1;color:#5b6370;white-space:pre;left:1297.16px;">7</span>
<svg style="position:absolute;left:621px;top:201px" width="14" height="14" viewBox="0 0 14 14" fill="#3f78ea"><rect x="1" y="1" width="12" height="3.800"/><path d="M1 6h12L7 12.300z"/></svg>
<svg style="position:absolute;left:1245px;top:201px" width="14" height="14" viewBox="0 0 14 14" fill="#3f78ea"><path d="M1 5.800h12L7 13.800z"/></svg>
<div style="position:absolute;left:532px;top:216px;width:816px;height:179px;background:#fff;border:1px solid #c4c7c5;border-top:none;"></div>
<div style="position:absolute;left:532px;top:404px;width:816px;height:628px;background:#fff;border:1px solid #c4c7c5;border-bottom:none;"></div>
<div style="position:absolute;left:533px;top:216px;width:815px;height:10px;overflow:hidden;">
<span style="position:absolute;top:-17.07px;font-family:'DejaVu Serif', 'Liberation Serif', serif;font-size:19px;line-height:1;color:#000;white-space:pre;left:142.00px;">adjusted</span>
<span style="position:absolute;top:-17.07px;font-family:'DejaVu Serif', 'Liberation Serif', serif;font-size:19px;line-height:1;color:#000;white-space:pre;left:455.00px;">changes</span>
<span style="position:absolute;top:-17.07px;font-family:'DejaVu Serif', 'Liberation Serif', serif;font-size:19px;line-height:1;color:#000;white-space:pre;left:633.00px;">your</span>
</div>
<span style="position:absolute;top:228.93px;font-family:'DejaVu Serif', 'Liberation Serif', serif;font-size:19px;line-height:1;color:#000;white-space:pre;letter-spacing:-0.488px;left:677.00px;-webkit-text-stroke:0.2px #000;">system.</span>
<div style="position:absolute;left:655px;top:510.500px;width:8.500px;height:8.500px;border-radius:50%;background:#000;"></div>
<span style="position:absolute;top:504.93px;font-family:'DejaVu Serif', 'Liberation Serif', serif;font-size:19px;line-height:1;color:#000;white-space:pre;letter-spacing:-0.477px;left:677.00px;-webkit-text-stroke:0.2px #000;">The number of days (30 days after start and 30 days before</span>
<span style="position:absolute;top:534.93px;font-family:'DejaVu Serif', 'Liberation Serif', serif;font-size:19px;line-height:1;color:#000;white-space:pre;letter-spacing:-0.477px;left:677.00px;-webkit-text-stroke:0.2px #000;">end) can be adjusted if your policy changes.</span>
<div style="position:absolute;left:1908px;top:771px;width:8px;height:40px;border-radius:4px;background:#dadce0;"></div>
<div style="position:absolute;left:1896px;top:984px;width:40px;height:40px;border-radius:20px;background:#fff;box-shadow:0 1px 2px rgba(60,64,67,.28),0 1px 3px 1px rgba(60,64,67,.12);"></div>
<svg style="position:absolute;left:1900.50px;top:995.00px" width="18" height="18" viewBox="0 0 24 24" fill="#444746" ><path d="M15.41 7.41L14 6l-6 6 6 6 1.41-1.41L10.83 12z"/></svg>
<div style="position:absolute;left:0px;top:1032px;width:1920px;height:48px;background:#1f1f1f;border-top:1px solid #3b3b3b;box-sizing:border-box;"></div>
<svg style="position:absolute;left:16px;top:1040px" width="30" height="28" viewBox="0 0 30 28"><defs><linearGradient id="mg" x1="0" y1="1" x2="1" y2="0"><stop offset="0" stop-color="#f39a17"/><stop offset="1" stop-color="#f9c83e"/></linearGradient><linearGradient id="cg" x1="0" y1="0" x2="0" y2="1"><stop offset="0" stop-color="#c6dffd"/><stop offset="1" stop-color="#9fc5f6"/></linearGradient></defs><path d="M18.500 4.500A10.900 10.900 0 1 1 5 18A10.760 10.760 0 0 0 18.500 4.500z" fill="url(#mg)"/><path d="M4.800 12.300a2.300 2.300 0 0 1-.600-4.400C5.500 5.500 7.500 2.500 10.200 2.300c3.300 0 5.300 2.700 5.800 4.900a2.600 2.600 0 0 1-.300 5.100z" fill="url(#cg)"/><path d="M15.300 24.300a2.100 2.100 0 0 1-.400-4c.900-2.500 3-4.300 5.700-4.300 2.500 0 4.200 1.600 4.900 3.600a2.400 2.400 0 0 1 0 4.700z" fill="url(#cg)"/></svg>
<span style="position:absolute;top:1041.84px;font-family:'Liberation Sans', sans-serif;font-size:12px;line-height:1;color:#ffffff;white-space:pre;letter-spacing:-0.710px;left:51.00px;">76°F</span>
<span style="position:absolute;top:1057.84px;font-family:'Liberation Sans', sans-serif;font-size:12px;line-height:1;color:#d6d6d6;white-space:pre;letter-spacing:0.024px;left:50.00px;">Partly cloudy</span>
<svg style="position:absolute;left:485px;top:1045px" width="23" height="23" viewBox="0 0 23 23"><defs><linearGradient id="wg" gradientUnits="userSpaceOnUse" x1="0" y1="0" x2="23" y2="23"><stop offset="0" stop-color="#8ad8fc"/><stop offset="1" stop-color="#149af0"/></linearGradient></defs><rect x="0" y="0" width="10.900" height="10.900" rx=".900" fill="url(#wg)"/><rect x="12.100" y="0" width="10.900" height="10.900" rx=".900" fill="url(#wg)"/><rect x="0" y="12.100" width="10.900" height="10.900" rx=".900" fill="url(#wg)"/><rect x="12.100" y="12.100" width="10.900" height="10.900" rx=".900" fill="url(#wg)"/></svg>
<div style="position:absolute;left:521px;top:1040px;width:220px;height:32px;border-radius:16px;background:#383838;border:1px solid #4a4a4a;box-sizing:border-box;"></div>
<svg style="position:absolute;left:531.700px;top:1047.500px" width="18" height="18" viewBox="0 0 18 18" fill="none" stroke="#f0f0f0" stroke-width="1.400"><circle cx="7.500" cy="7.500" r="5.200"/><path d="M11.300 11.300l4.700 4.700" stroke-linecap="round"/></svg>
<span style="position:absolute;top:1049.15px;font-family:'Liberation Sans', sans-serif;font-size:14px;line-height:1;color:#d0d0d0;white-space:pre;letter-spacing:-0.611px;left:558.00px;">Search</span>
<div style="position:absolute;left:522px;top:1041px;width:218px;height:30px;border-radius:15px;overflow:hidden;">
<svg style="position:absolute;left:168px;top:0px" width="46" height="30" viewBox="0 0 46 30"><defs><radialGradient id="mn" cx=".65" cy=".3" r=".8"><stop offset="0" stop-color="#fdeaa4"/><stop offset=".6" stop-color="#f8cd62"/><stop offset="1" stop-color="#f0a94a"/></radialGradient><linearGradient id="gr" x1="0" y1="0" x2="1" y2="0"><stop offset="0" stop-color="#f4f6fb"/><stop offset=".45" stop-color="#dfe5f2"/><stop offset=".6" stop-color="#5a6fb5"/><stop offset="1" stop-color="#46589d"/></linearGradient></defs><circle cx="22" cy="12.400" r="11.500" fill="url(#mn)"/><circle cx="16.500" cy="11" r="2.300" fill="#f0b545"/><circle cx="27.500" cy="10.500" r="1.500" fill="#f3c45c"/><circle cx="22" cy="17.500" r="1.300" fill="#eeb24c"/><ellipse cx="15.500" cy="21" rx="2.200" ry="1.400" fill="#e9826a"/><path d="M1 24l2.500-6.500 2 4 2-8 3 8.500 1.500-3 2 5.500z" fill="#4a60d2"/><path d="M27.500 24l1.500-5 2 3.500 2.500-9.500 2.500 8 2-5.500 2.500 6.500 2 2.500z" fill="#4a60d2"/><path d="M0 23.800c7-1.500 15-1 22 0 8 1 15 .5 22-1-1 3-6 4.700-14 4.700H12C6 27.500 1.500 26 0 23.800z" fill="url(#gr)"/></svg>
</div>
<div style="position:absolute;left:753px;top:1051px;width:18px;height:15px;background:#6d6d6d;border-radius:1.500px;background:linear-gradient(135deg,#8a8a8a,#5a5a5a);"></div>
<div style="position:absolute;left:759px;top:1045px;width:18px;height:16px;background:#fff;border-radius:1.500px;background:linear-gradient(135deg,#ffffff,#d8d8d8);"></div>
<svg style="position:absolute;left:796px;top:1043px" width="25" height="25" viewBox="0 0 25 25"><defs><linearGradient id="tg" x1="0" y1="0" x2="1" y2="1"><stop offset="0" stop-color="#8b8fe8"/><stop offset="1" stop-color="#4f52b2"/></linearGradient></defs><path d="M12.500 1a11.500 11.500 0 1 1-6 21.300L1 24l1.700-5.200A11.500 11.500 0 0 1 12.500 1z" fill="url(#tg)"/><rect x="6" y="8" width="9.500" height="8.500" rx="1.500" fill="#fff"/><path d="M16.300 11l3.200-2.200v7.400L16.300 14z" fill="#fff"/></svg>
<svg style="position:absolute;left:840px;top:1044px" width="26" height="24" viewBox="0 0 26 24"><path d="M1 3c0-1.100.9-2 2-2h6.500l2.500 2.500H23c1.100 0 2 .9 2 2V8H1z" fill="#e5a51b"/><path d="M1 6.500h24V21c0 .800-.700 1.500-1.500 1.500h-21C1.700 22.500 1 21.800 1 21z" fill="#f9d14e"/><path d="M6.500 16.500c0-1.100.9-2 2-2h9c1.100 0 2 .9 2 2v6h-13z" fill="#1b7fd6"/><rect x="9.500" y="17.500" width="7" height="1.500" rx=".700" fill="#5bb3f5"/></svg>
<div style="position:absolute;left:849.5px;top:1072px;width:6px;height:3px;border-radius:1.500px;background:#8b8b8b;"></div>
<svg style="position:absolute;left:884px;top:1043.500px" width="26" height="26" viewBox="0 0 26 26"><defs><linearGradient id="eg1" x1="0" y1="0" x2="1" y2="0"><stop offset="0" stop-color="#1b9de2"/><stop offset=".45" stop-color="#2cc3d6"/><stop offset="1" stop-color="#62dc5c"/></linearGradient><linearGradient id="eg2" x1="0" y1="0" x2="0" y2="1"><stop offset="0" stop-color="#1e96de"/><stop offset="1" stop-color="#0c57a8"/></linearGradient></defs><circle cx="11.500" cy="15" r="7.500" fill="#0f5cad"/><path d="M1 13.500C1 9.500 4 8 8 8.500c3 .400 4 2.500 3.500 5-.400 3 1 7.500 6 8.500 3 .500 5-.500 6-1.500C21.500 23.500 18 25 14 25 7 25 1 20 1 13.500z" fill="url(#eg2)"/><path d="M1.100 12.300C1.800 6 6.800 1 13 1c6.800 0 12 4.700 12 10.500 0 3.600-2.700 5.700-5.700 5.700-2.700 0-4.300-1-4.300-2.300 0-.800.900-1.400.900-2.900 0-2.300-2.400-4.300-5.400-4.300-4.300 0-7.500 2.500-9.400 4.600z" fill="url(#eg1)"/><path d="M10.800 12.800c-.800 4.200 1.700 8.700 7.200 9.300 2.500.200 4.500-.700 5.800-2-2 3.200-5.500 4.600-9.300 4.600-5.200 0-9.500-3.800-9.500-8.700 0-3.500 2.500-6.200 6-6.700-.300 1-.400 2.300-.200 3.500z" fill="#1166b8" opacity=".9"/></svg>
<svg style="position:absolute;left:928px;top:1043px" width="25" height="26" viewBox="0 0 25 26"><defs><linearGradient id="fg" x1="0.800" y1="0.050" x2="0.250" y2="1"><stop offset="0" stop-color="#fff36a"/><stop offset=".3" stop-color="#ffb42c"/><stop offset=".6" stop-color="#ff5a36"/><stop offset="1" stop-color="#e8158f"/></linearGradient></defs><path d="M13.500 1.500C15.500 3 17 5 17.300 7c1-.400 1.600-1.200 1.800-2.200 2.700 2.500 4.400 5.500 4.400 9.200C23.500 20.300 18.600 25 12.500 25S1.500 20.300 1.500 14c0-3 1-5.500 2.500-7.300 0 .900.200 1.700.600 2.300.500-1.600 1.500-2.800 2.600-3.300-.100 1 .100 1.800.600 2.500C9 6.500 10.500 5 12.300 4.500c.700-.900 1.200-2 1.200-3z" fill="url(#fg)"/><circle cx="11.500" cy="14.500" r="4.600" fill="#8a3cf0"/><path d="M7 12.300c1.200-1.800 3.800-2.500 5.800-1.600-1.300.300-2.100 1-2.300 1.900 1.300-.500 2.800-.100 3.500.9-2.300-.400-4.500 1.500-3.800 4.100-2.200-.300-3.800-2.500-3.200-5.300z" fill="#ff8a1c"/></svg>
<svg style="position:absolute;left:972.2px;top:1043.5px" width="25.0" height="25.0" viewBox="4 4 40 40"><circle cx="24" cy="24" r="10.500" fill="#fff"/><path d="M24 14h17.320A20 20 0 0 0 6.680 14L15.340 29A10 10 0 0 1 24 14z" fill="#ea4335"/><path d="M32.660 29L24 44A20 20 0 0 0 41.320 14H24a10 10 0 0 1 8.660 15z" fill="#fbbc04"/><path d="M15.340 29L6.680 14A20 20 0 0 0 24 44l8.660-15a10 10 0 0 1-17.320 0z" fill="#34a853"/><circle cx="24" cy="24" r="9.300" fill="#fff"/><circle cx="24" cy="24" r="7.500" fill="#4285f4"/></svg>
<svg style="position:absolute;left:986.8px;top:1039.5px" width="15.0" height="15.0" viewBox="0 0 40 40"><defs><clipPath id="av994"><circle cx="20" cy="20" r="20"/></clipPath></defs><g clip-path="url(#av994)"><rect width="40" height="40" fill="#dedcda"/><path d="M3 40c1-7 7-9.500 17-9.500s16 2.500 17 9.500z" fill="#a9c9e8"/><path d="M16 27h8v6l-4 3-4-3z" fill="#b98d6e"/><ellipse cx="20" cy="17" rx="7.600" ry="9.800" fill="#c39a7c"/><path d="M10.800 16c-.800-9 3.500-14 9.200-14s10 5 9.200 14c-.600-3-1.300-5-2.400-6-3.500 1.200-10 1.200-13.600 0-1.100 1-1.800 3-2.400 6z" fill="#1b1716"/><path d="M12.600 18c.300 7 3.200 11.500 7.400 11.500s7.100-4.500 7.400-11.500c-1 3.500-2.400 4.200-4 4.200h-6.800c-1.600 0-3-.700-4-4.200z" fill="#241c19"/><path d="M16.500 30.500l3.500 4 3.500-4" stroke="#8fb3d9" stroke-width="1" fill="none"/></g></svg>
<div style="position:absolute;left:981.7px;top:1072px;width:6px;height:3px;border-radius:1.500px;background:#8b8b8b;"></div>
<svg style="position:absolute;left:1016.5px;top:1043.5px" width="25.0" height="25.0" viewBox="4 4 40 40"><circle cx="24" cy="24" r="10.500" fill="#fff"/><path d="M24 14h17.320A20 20 0 0 0 6.680 14L15.340 29A10 10 0 0 1 24 14z" fill="#ea4335"/><path d="M32.660 29L24 44A20 20 0 0 0 41.320 14H24a10 10 0 0 1 8.660 15z" fill="#fbbc04"/><path d="M15.340 29L6.680 14A20 20 0 0 0 24 44l8.660-15a10 10 0 0 1-17.320 0z" fill="#34a853"/><circle cx="24" cy="24" r="9.300" fill="#fff"/><circle cx="24" cy="24" r="7.500" fill="#4285f4"/></svg>
<div style="position:absolute;left:1030px;top:1043px;width:11px;height:11px;border-radius:2.500px;background:#2b2b2b;border:1px solid #777;transform:rotate(-20deg);box-sizing:border-box;"></div>
<div style="position:absolute;left:1053px;top:1036px;width:39px;height:40px;border-radius:4px;background:#2e2e2e;border:1px solid #3d3d3d;box-sizing:border-box;"></div>
<div style="position:absolute;left:1087px;top:1037px;width:1px;height:38px;background:#1f1f1f;"></div>
<svg style="position:absolute;left:1060.5px;top:1043.5px" width="25.0" height="25.0" viewBox="4 4 40 40"><circle cx="24" cy="24" r="10.500" fill="#fff"/><path d="M24 14h17.320A20 20 0 0 0 6.680 14L15.340 29A10 10 0 0 1 24 14z" fill="#ea4335"/><path d="M32.660 29L24 44A20 20 0 0 0 41.320 14H24a10 10 0 0 1 8.660 15z" fill="#fbbc04"/><path d="M15.340 29L6.680 14A20 20 0 0 0 24 44l8.660-15a10 10 0 0 1-17.320 0z" fill="#34a853"/><circle cx="24" cy="24" r="9.300" fill="#fff"/><circle cx="24" cy="24" r="7.500" fill="#4285f4"/></svg>
<div style="position:absolute;left:1074px;top:1039px;width:16px;height:16px;border-radius:8px;background:#c2185b;"></div>
<span style="position:absolute;top:1042.34px;font-family:'Liberation Sans', sans-serif;font-size:10px;line-height:1;color:#ffffff;white-space:pre;left:1078.66px;">S</span>
<div style="position:absolute;left:1065.500px;top:1072px;width:15px;height:3px;border-radius:1.500px;background:#4cc2ff;"></div>
<svg style="position:absolute;left:1105px;top:1046px" width="25" height="20" viewBox="0 0 25 20"><rect x=".5" y=".5" width="24" height="19" fill="#eaf6fd" stroke="#9aa7b0"/><path d="M1.500 18V14l2-1 2-8 1.500 5 2-1 2 4 2-2 2-7 1.500 6 2 1 2 3 2 1v3z" fill="#63b7ea"/><path d="M1.500 14l2-1 2-8 1.500 5 2-1 2 4 2-2 2-7 1.500 6 2 1 2 3 2 1" fill="none" stroke="#2e86c9" stroke-width=".800"/></svg>
<svg style="position:absolute;left:1149px;top:1046px" width="23" height="19" viewBox="0 0 23 19"><rect x=".5" y=".5" width="22" height="18" fill="#000" stroke="#8f8f8f"/><rect x="1" y="1" width="21" height="1.500" fill="#cfcfcf"/><rect x="3" y="5.500" width="6" height="3.500" fill="#bdbdbd" opacity=".8"/><rect x="11" y="8.500" width="7" height="1" fill="#fff"/></svg>
<svg style="position:absolute;left:1192px;top:1043px" width="26" height="26" viewBox="0 0 26 26"><path d="M6 2C2 3 .8 7 2 11c.8 3 2 6 4 7l1-3c.3 3 .5 5 1.500 6.500.300 1.500.500 2.500 2 2.700 1.500.200 3 .300 4-.700l.5-6c3 .5 5.500-.500 6-1.500-1.500.300-3 0-3.500-.500C22 13 24.500 8 23 4.500 21.500 1.500 17 1 14.500 2.500 12 1 8.500 1 6 2z" fill="#386c9c" stroke="#dfe8f2" stroke-width=".900"/><path d="M9.500 3.500c-2 2-2.500 6-1.500 9.500M14.500 2.800c2 .800 3.500 3 3.500 5.500 0 2-1 3.500-.800 5.500M8 13c.800.500 2 .500 2.800 0M12.500 9c.3-1 1.300-1.500 2.300-1" fill="none" stroke="#dfe8f2" stroke-width=".700"/></svg>
<svg style="position:absolute;left:1237px;top:1044px" width="25" height="24" viewBox="0 0 25 24"><path d="M17.500 0L25 3.500v17L17.500 24 5 13.500 2 16 0 15V9l2-1 3 2.500z" fill="#1a86d2"/><path d="M17.500 0L25 3.500v17L17.500 24z" fill="#2aabf3"/><path d="M17.500 6.500v11L10 12z" fill="#1f1f1f"/><path d="M0 9l2-1 15.500 16L25 20.500 17.500 17.500z" fill="#1577c2" opacity=".5"/></svg>
<div style="position:absolute;left:1246.0px;top:1072px;width:6px;height:3px;border-radius:1.500px;background:#8b8b8b;"></div>
<svg style="position:absolute;left:1280px;top:1044px" width="25" height="24" viewBox="0 0 25 24"><defs><linearGradient id="pcg" x1="0" y1="0" x2="1" y2="1"><stop offset="0" stop-color="#21d789"/><stop offset=".35" stop-color="#07c3f2"/><stop offset=".5" stop-color="#21d789"/><stop offset="1" stop-color="#fcf84a"/></linearGradient></defs><path d="M1 2l14-2 9 6 1 14-8 4H3L0 14z" fill="url(#pcg)"/><path d="M0 1l10-1 3 5-8 6z" fill="#07c3f2"/><path d="M16 4l8 2 1 14-6 2z" fill="#fcf84a"/><path d="M2 14l8 2 6 8H3z" fill="#21d789"/><rect x="4.500" y="3.700" width="16.200" height="15.500" fill="#000"/></svg>
<span style="position:absolute;top:1048.80px;font-family:'Liberation Sans', sans-serif;font-size:8.5px;line-height:1;color:#ffffff;white-space:pre;font-weight:700;letter-spacing:-0.208px;left:1286.00px;">PC</span>
<div style="position:absolute;left:1286.5px;top:1059.5px;width:5px;height:1px;background:#fff;"></div>
<svg style="position:absolute;left:1324px;top:1043px" width="26" height="26" viewBox="0 0 26 26"><g transform="rotate(45 13 13)"><rect x="4" y="4" width="8.600" height="8.600" rx="1.200" fill="#f07178"/><rect x="13.400" y="4" width="8.600" height="8.600" rx="1.200" fill="#82c552"/><rect x="4" y="13.400" width="8.600" height="8.600" rx="1.200" fill="#6ea4f4"/><rect x="13.400" y="13.400" width="8.600" height="8.600" rx="1.200" fill="#f7dc6f"/></g><path d="M11 5.500l2.500 5V20M13.500 13l4-1" stroke="#1a1a1a" stroke-width="1.600" fill="none"/><circle cx="13.500" cy="20" r="1.600" fill="#1a1a1a"/><circle cx="17.800" cy="12" r="1.600" fill="#1a1a1a"/><circle cx="11" cy="5.500" r="1.300" fill="#1a1a1a"/></svg>
<div style="position:absolute;left:1369px;top:1044px;width:24.5px;height:24px;background:#ffffff;"></div>
<svg style="position:absolute;left:1373px;top:1047px" width="16" height="12" viewBox="0 0 16 12"><rect x="1" y=".5" width="14" height="8.500" rx="1" fill="#dff1fb" stroke="#2a7fc0" stroke-width="1"/><rect x="6.500" y="9" width="3" height="1.500" fill="#2a7fc0"/><rect x="4" y="10.500" width="8" height="1.200" fill="#2a7fc0"/><circle cx="5.500" cy="4.700" r="1.600" fill="#5cb85c"/><rect x="8.500" y="3.300" width="4" height="2.600" fill="#2a7fc0" opacity=".7"/></svg>
<span style="position:absolute;top:1060.11px;font-family:'Liberation Sans', sans-serif;font-size:4.6px;line-height:1;color:#555;white-space:pre;left:1372.50px;">TaskPro</span>
<div style="position:absolute;left:1378.0px;top:1072px;width:6px;height:3px;border-radius:1.500px;background:#8b8b8b;"></div>
<svg style="position:absolute;left:1415px;top:1044px" width="20" height="24" viewBox="0 0 20 24"><defs><linearGradient id="lw" x1=".7" y1="0" x2=".2" y2="1"><stop offset="0" stop-color="#27a3ea"/><stop offset="1" stop-color="#0c59bd"/></linearGradient></defs><path d="M2.500 0H11.300L20 8.700V21.500c0 1.400-1.100 2.500-2.500 2.500h-15C1.100 24 0 22.900 0 21.500v-19C0 1.100 1.100 0 2.500 0z" fill="url(#lw)"/><path d="M13.600 0H20V6.400z" fill="#34c1f1"/><rect x="4" y="10" width="4.800" height="1.300" fill="#9fd2f7"/><rect x="4" y="11.800" width="4.800" height="1.300" fill="#eaf6ff"/><rect x="4" y="13.600" width="4.800" height="1.100" fill="#7fc0f2"/><rect x="10.800" y="10.600" width="5.200" height="3.800" fill="#d8eefd"/><rect x="4" y="15.800" width="12" height="1.700" fill="#cfe9ff"/><rect x="4" y="18.600" width="5" height="1.300" fill="#a9d6f8"/></svg>
<div style="position:absolute;left:1422.0px;top:1072px;width:6px;height:3px;border-radius:1.500px;background:#8b8b8b;"></div>
<svg style="position:absolute;left:1671px;top:1051px" width="12" height="10" viewBox="0 0 12 10" fill="none" stroke="#fff" stroke-width="1.400"><path d="M1 7.500l5-5 5 5"/></svg>
<svg style="position:absolute;left:1700px;top:1049px" width="18" height="13" viewBox="0 0 18 13"><defs><linearGradient id="od" x1="0" y1="0" x2="1" y2="1"><stop offset="0" stop-color="#f2f2f2"/><stop offset="1" stop-color="#a8a8a8"/></linearGradient></defs><path d="M4.500 12a3.800 3.800 0 0 1-.800-7.500A5 5 0 0 1 13 4.200a4 4 0 0 1 .800 7.800z" fill="url(#od)"/></svg>
<svg style="position:absolute;left:1732.500px;top:1049px" width="17" height="12" viewBox="0 0 17 12" fill="none" stroke="#fff" stroke-width="1"><rect x=".5" y=".5" width="16" height="11" rx="1.500"/><path d="M3 3.500h1.200M5.700 3.500h1.200M8.400 3.500h1.200M11.100 3.500h1.200M13 3.500h1M3 5.800h1.200M5.700 5.800h1.200M8.400 5.800h1.200M11.100 5.800h1.200M13 5.800h1M4.500 8.500h8" stroke-width="1.200"/></svg>
<svg style="position:absolute;left:1764px;top:1048px" width="18" height="14" viewBox="0 0 18 14" fill="none" stroke="#fff" stroke-width="1.300" stroke-linecap="round"><path d="M1 5a11.500 11.500 0 0 1 16 0"/><path d="M3.700 7.800a7.600 7.600 0 0 1 10.600 0"/><path d="M6.300 10.400a3.900 3.900 0 0 1 5.400 0"/><circle cx="9" cy="12.300" r=".900" fill="#fff" stroke="none"/></svg>
<svg style="position:absolute;left:1788px;top:1048px" width="18" height="16" viewBox="0 0 18 16" fill="none" stroke="#fff" stroke-width="1.200" stroke-linejoin="round" stroke-linecap="round"><path d="M1 5.500h2.500L7 2.500v11l-3.500-3H1z"/><path d="M9.500 5.500a3.500 3.500 0 0 1 0 5"/><path d="M11.800 3.500a6.300 6.300 0 0 1 0 9"/><path d="M14 1.500a9.200 9.200 0 0 1 0 13"/></svg>
<span style="position:absolute;top:1041.84px;font-family:'Liberation Sans', sans-serif;font-size:12px;line-height:1;color:#ffffff;white-space:pre;letter-spacing:-0.339px;right:44.00px;">5:31 PM</span>
<span style="position:absolute;top:1057.84px;font-family:'Liberation Sans', sans-serif;font-size:12px;line-height:1;color:#ffffff;white-space:pre;letter-spacing:0.189px;right:43.81px;">12/4/2025</span>
<svg style="position:absolute;left:1884px;top:1047px" width="16" height="18" viewBox="0 0 16 18"><path d="M8 1a5.500 5.500 0 0 0-5.500 5.500v3.500L1 13v1h14v-1l-1.500-3V6.500A5.500 5.500 0 0 0 8 1z" fill="#8fdcfb"/><path d="M6 15.500h4a2 2 0 0 1-4 0z" fill="#8fdcfb"/></svg>
</div></body></html>
